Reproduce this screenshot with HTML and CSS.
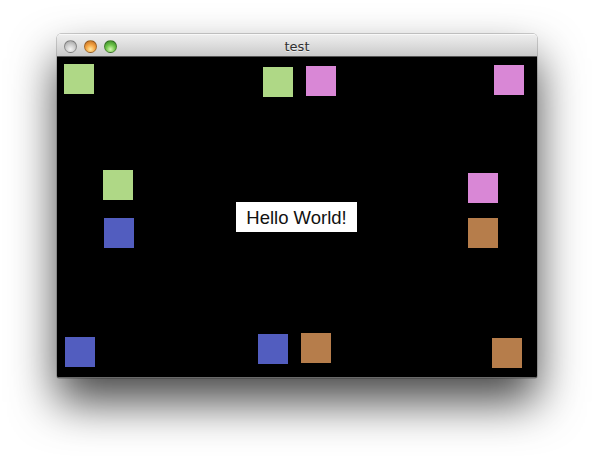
FILE: index.html
```html
<!DOCTYPE html>
<html>
<head>
<meta charset="utf-8">
<title>test</title>
<link rel="stylesheet" href="styles.css">
</head>
<body>
<div class="window">
  <div class="titlebar">
    <div class="lights">
      <span class="light close"></span>
      <span class="light min"></span>
      <span class="light zoom"></span>
    </div>
    <div class="title">test</div>
  </div>
  <div class="canvas">
    <div class="sq green" style="left:7px;top:7px"></div>
    <div class="sq green" style="left:206px;top:10px"></div>
    <div class="sq pink" style="left:249px;top:9px"></div>
    <div class="sq pink" style="left:437px;top:8px"></div>
    <div class="sq green" style="left:46px;top:113px"></div>
    <div class="sq blue" style="left:47px;top:161px"></div>
    <div class="sq pink" style="left:411px;top:116px"></div>
    <div class="sq brown" style="left:411px;top:161px"></div>
    <div class="sq blue" style="left:8px;top:280px"></div>
    <div class="sq blue" style="left:201px;top:277px"></div>
    <div class="sq brown" style="left:244px;top:276px"></div>
    <div class="sq brown" style="left:435px;top:281px"></div>
    <div class="label">Hello World!</div>
  </div>
</div>
</body>
</html>
```
FILE: styles.css
```css
html, body {
  margin: 0;
  background: #ffffff;
}
body {
  padding: 34px 0 0 57px;
  height: 456px;
  box-sizing: border-box;
  overflow: hidden;
}
.window {
  width: 480px;
  border-radius: 4px 4px 2px 2px;
  box-shadow: 0 0 0 0.5px rgba(0,0,0,0.35), 0 24px 46px rgba(0,0,0,0.72);
  overflow: hidden;
}
.titlebar {
  height: 23px;
  position: relative;
  background: linear-gradient(#ededed 0%, #dedede 45%, #c9c9c9 100%);
  border-top: 1px solid #f8f8f8;
  border-bottom: 1px solid #555;
  box-sizing: border-box;
  display: flex;
  align-items: center;
  justify-content: center;
}
.lights {
  position: absolute;
  left: 7px;
  top: 5px;
  display: flex;
  gap: 7px;
}
.light {
  width: 13px;
  height: 13px;
  border-radius: 50%;
  box-sizing: border-box;
  border: 1px solid rgba(0,0,0,0.3);
}
.close {
  background: radial-gradient(circle at 50% 75%, #f4f4f4 0%, #cfcfcf 45%, #9a9a9a 100%);
}
.min {
  background: radial-gradient(circle at 50% 75%, #ffe9a0 0%, #f5a443 45%, #b8641a 100%);
}
.zoom {
  background: radial-gradient(circle at 50% 75%, #d4f7b0 0%, #6fc54a 45%, #2e7d1e 100%);
}
.title {
  font-family: "DejaVu Sans", "Liberation Sans", sans-serif;
  font-size: 13px;
  color: #303030;
  text-shadow: 0 1px 0 rgba(255,255,255,0.6);
  padding-top: 2px;
}
.canvas {
  position: relative;
  height: 320px;
  background: #000000;
  border-bottom: 1px solid #6a6a6a;
}
.sq {
  position: absolute;
  width: 30px;
  height: 30px;
}
.green { background: #afd886; }
.pink { background: #d987d6; }
.blue { background: #525dbf; }
.brown { background: #b67d4b; }
.label {
  position: absolute;
  left: 179px;
  top: 145px;
  width: 121px;
  height: 30px;
  background: #ffffff;
  color: #111;
  font-family: "Liberation Sans", Arial, sans-serif;
  font-size: 18.5px;
  display: flex;
  align-items: center;
  justify-content: center;
  padding-top: 1px;
  box-sizing: border-box;
}
```
